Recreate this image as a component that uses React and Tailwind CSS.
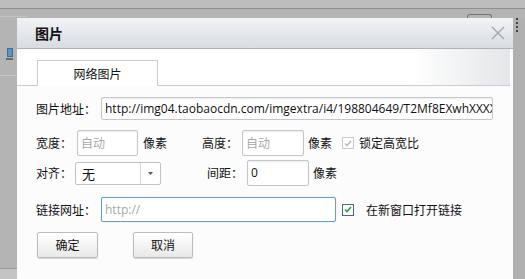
import React from "react";

const cjk = { fontFamily: '"Noto Sans CJK SC", "Noto Sans", sans-serif' };
const latin = { fontFamily: '"Open Sans", "Noto Sans CJK SC", sans-serif' };

function TextInput({ className = "", value, placeholder, focused }) {
    return (
        <div
            className={`h-full flex items-center pl-[3px] bg-white rounded-[2px] border overflow-hidden whitespace-nowrap ${
                focused
                    ? "border-[#5f9fd2] shadow-[0_0_1px_rgba(95,159,210,0.6)]"
                    : "border-[#c3c6ca] shadow-[inset_0_1px_2px_rgba(0,0,0,0.08)]"
            } ${className}`}
        >
            {value ? (
                <span className="text-[12px] text-[#111]" style={latin}>{value}</span>
            ) : (
                <span className="text-[12px] text-[#a8a8a8]" style={placeholder === "http://" ? latin : cjk}>
                    {placeholder}
                </span>
            )}
        </div>
    );
}

function Check({ disabled }) {
    return (
        <div
            className={`w-[12px] h-[12px] border flex items-center justify-center bg-white ${
                disabled ? "border-[#c9c9c9]" : "border-[#4f6a6a]"
            }`}
        >
            <svg width="8" height="7" viewBox="0 0 8 7">
                <path
                    d="M1 3.5 L3 5.5 L7 1"
                    fill="none"
                    stroke={disabled ? "#bdbdbd" : "#2f9a3a"}
                    strokeWidth="1.6"
                />
            </svg>
        </div>
    );
}

function Button({ children, className = "" }) {
    return (
        <div
            className={`h-[26px] flex items-center justify-center text-[12px] text-[#111] border border-[#b9bbbe] rounded-[2px] bg-gradient-to-b from-white to-[#e9e9e9] shadow-[0_1px_1px_rgba(0,0,0,0.15)] ${className}`}
            style={cjk}
        >
            {children}
        </div>
    );
}

export default function App() {
    return (
        <div className="w-[525px] h-[279px] bg-[#b4b4b4] flex flex-col overflow-hidden">
            {/* page behind the dialog */}
            <div className="h-[9px] bg-[#bdbdbd] border-b border-[#8e8e8e]" />
            <div className="h-[9px] flex">
                <div className="w-[27px] border-t border-[#c4c4c4] mt-[7px]" />
                <div className="ml-[440px] mt-[5px] w-[25px] h-[4px] border-t border-x border-[#6d7580] rounded-t-[3px]" />
            </div>
            <div className="flex flex-1 min-h-0">
                <div className="w-[17px] flex flex-col">
                    <div className="h-[30px]" />
                    <div className="ml-[7px] w-[6px] h-[9px] bg-[#5d93bd] border border-[#3f6f95]" />
                    <div className="ml-[6px] w-[7px] h-[2px] bg-[#6a6a6a] mt-[1px]" />
                    <div className="mt-[15px] border-t border-[#c6c6c6]" />
                    <div className="flex-1" />
                    <div className="h-[11px] bg-[#c3c3c3] border-t border-[#9a9a9a]" />
                </div>

                {/* dialog */}
                <div className="w-[496px] flex flex-col bg-[#fcfcfc]">
                    <div className="h-[31px] flex items-center justify-between pl-[18px] pr-[8px] bg-gradient-to-b from-[#f1f3f6] to-[#d8dce2] border-b border-[#aeb3ba]">
                        <span className="text-[14px] font-bold text-[#111]" style={cjk}>图片</span>
                        <svg width="14" height="14" viewBox="0 0 14 14">
                            <path d="M1 1 L13 13 M13 1 L1 13" stroke="#a2a7ad" strokeWidth="1.4" />
                        </svg>
                    </div>

                    {/* tabs */}
                    <div className="pt-[11px] pl-[20px] mr-[3px] border-b border-[#c9cdd2] bg-gradient-to-r from-white from-80% to-[#e4e6e9] flex">
                        <div
                            className="w-[121px] h-[26px] -mb-px bg-white border border-b-0 border-[#c9cdd2] flex items-center justify-center text-[12px] text-[#111]"
                            style={cjk}
                        >
                            网络图片
                        </div>
                    </div>

                    {/* form */}
                    <div className="pl-[19px] text-[12px] text-[#111]" style={cjk}>
                        <div className="flex items-center h-[23px] mt-[11px]">
                            <span className="w-[65px]">图片地址：</span>
                            <TextInput
                                className="w-[392px]"
                                value="http://img04.taobaocdn.com/imgextra/i4/198804649/T2Mf8EXwhXXXXXXXX"
                            />
                        </div>

                        <div className="flex items-center h-[26px] mt-[10px]">
                            <span className="w-[41px]">宽度：</span>
                            <TextInput className="w-[61px]" placeholder="自动" />
                            <span className="w-[64px] pl-[5px]">像素</span>
                            <span className="w-[40px]">高度：</span>
                            <TextInput className="w-[62px]" placeholder="自动" />
                            <span className="w-[38px] pl-[4px]">像素</span>
                            <Check disabled />
                            <span className="ml-[5px]">锁定高宽比</span>
                        </div>

                        <div className="flex items-center h-[26px] mt-[4px]">
                            <span className="w-[39px]">对齐：</span>
                            <div className="w-[86px] h-[23px] flex bg-white border border-[#bfc2c6] rounded-[2px]">
                                <span className="flex-1 flex items-center pl-[6px] pt-[2px] text-[13px]">无</span>
                                <div className="w-[20px] border-l border-[#d2d4d7] flex items-center justify-center">
                                    <svg width="5" height="3" viewBox="0 0 5 3">
                                        <path d="M0 0 L5 0 L2.5 3 Z" fill="#555" />
                                    </svg>
                                </div>
                            </div>
                            <span className="w-[46px]" />
                            <span className="w-[40px]">间距：</span>
                            <TextInput className="w-[62px]" value="0" />
                            <span className="pl-[4px]">像素</span>
                        </div>

                        <div className="flex items-center h-[25px] mt-[11px]">
                            <span className="w-[65px]">链接网址：</span>
                            <TextInput className="w-[235px]" placeholder="http://" focused />
                            <div className="ml-[6px]">
                                <Check />
                            </div>
                            <span className="ml-[12px]">在新窗口打开链接</span>
                        </div>

                        <div className="flex items-center mt-[10px] pl-[1px] gap-[35px]">
                            <Button className="w-[61px]">确定</Button>
                            <Button className="w-[60px]">取消</Button>
                        </div>
                    </div>
                </div>

                <div className="flex-1 flex flex-col bg-[#b0b0b0]">
                    <div className="ml-[3px] flex flex-col gap-[2px]">
                        <div className="w-[2px] h-[2px] bg-[#444]" />
                        <div className="w-[2px] h-[2px] bg-[#444]" />
                        <div className="w-[2px] h-[2px] bg-[#444]" />
                        <div className="w-[2px] h-[2px] bg-[#444]" />
                    </div>
                </div>
            </div>
        </div>
    );
}
